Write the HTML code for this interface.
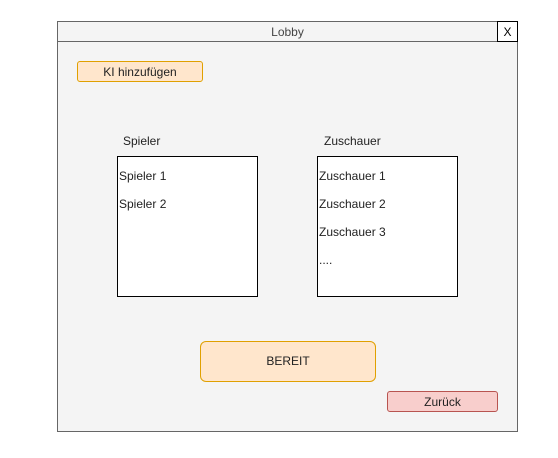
<!DOCTYPE html>
<html><head><style>
body{margin:0;width:558px;height:458px;background:#fff;font-family:"Liberation Sans",sans-serif;font-size:12px;color:#222;position:relative}
div{position:absolute;box-sizing:border-box}
.c{display:flex;align-items:center;justify-content:center}
.list div{position:static;height:28px;line-height:20px;padding-left:1px}
</style></head><body>
<div style="left:57px;top:21px;width:461px;height:411px;background:#f4f4f4;border:1px solid #666"></div>
<div class="c" style="left:57px;top:21px;width:461px;height:21px;border:1px solid #666;color:#444">Lobby</div>
<div class="c" style="left:497px;top:21px;width:21px;height:21px;border:1px solid #000;background:#fff;color:#000">X</div>
<div class="c" style="left:77px;top:61px;width:126px;height:21px;background:#ffe6cc;border:1px solid #e0a000;border-radius:3px">KI hinzufügen</div>
<div style="left:123px;top:134px">Spieler</div>
<div style="left:324px;top:134px">Zuschauer</div>
<div class="list" style="left:117px;top:156px;width:141px;height:141px;border:1px solid #000;background:#fff;padding-top:9px"><div>Spieler 1</div><div>Spieler 2</div></div>
<div class="list" style="left:317px;top:156px;width:141px;height:141px;border:1px solid #000;background:#fff;padding-top:9px"><div>Zuschauer 1</div><div>Zuschauer 2</div><div>Zuschauer 3</div><div>....</div></div>
<div class="c" style="left:200px;top:341px;width:176px;height:41px;background:#ffe6cc;border:1px solid #e0a000;border-radius:6px;padding-bottom:2px">BEREIT</div>
<div class="c" style="left:387px;top:391px;width:111px;height:21px;background:#f8cecc;border:1px solid #b85450;border-radius:3px">Zurück</div>
</body></html>
